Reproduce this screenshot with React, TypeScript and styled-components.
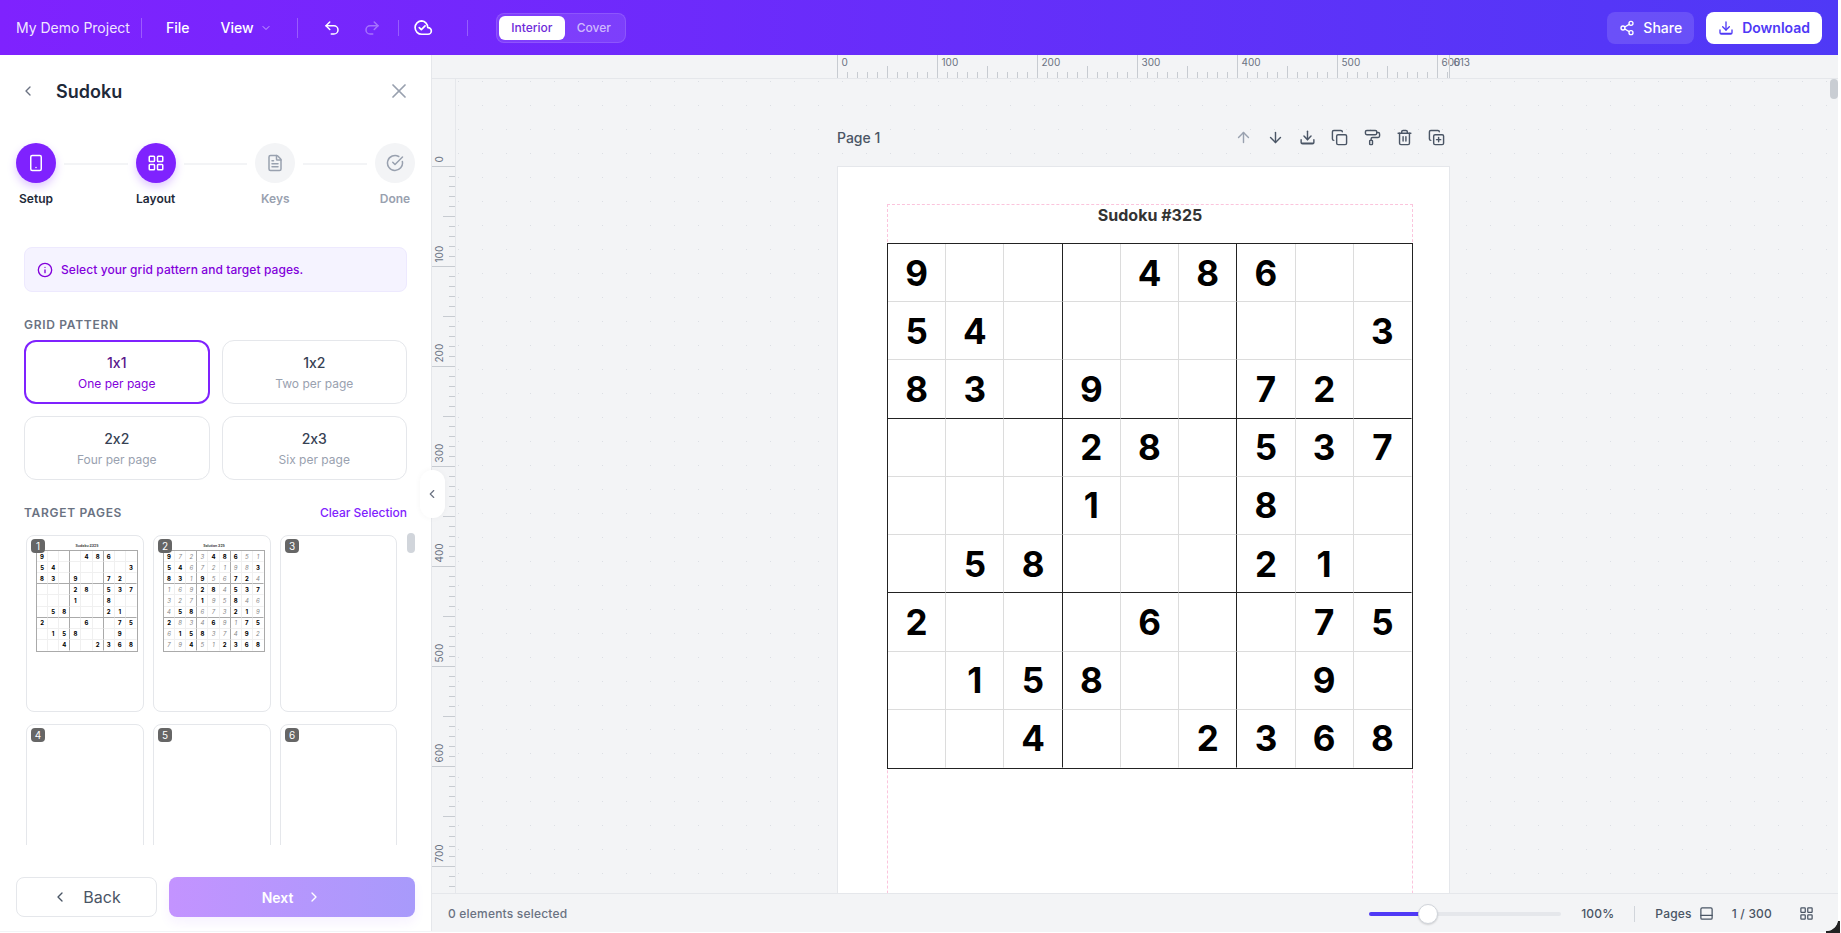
import { Fragment } from "react";
import styled, { createGlobalStyle } from "styled-components";
import {
  ArrowDown,
  ArrowUp,
  ChevronDown,
  ChevronLeft,
  ChevronRight,
  CircleCheckBig,
  Copy,
  CopyPlus,
  FileText,
  Info,
  LayoutGrid,
  PaintRoller,
  PanelBottom,
  Redo2,
  Share2,
  Smartphone,
  Trash2,
  Undo2,
  X,
} from "lucide-react";

const GlobalStyle = createGlobalStyle`
  html, body {
    margin: 0;
    background: #fff;
    overflow: hidden;
  }
  body {
    font-family: Inter, "Liberation Sans", sans-serif;
    font-feature-settings: "calt" 0;
  }
  * {
    box-sizing: border-box;
  }
`;

const PUZZLE = [
  "9...486..",
  "54......3",
  "83.9..72.",
  "...28.537",
  "...1..8..",
  ".58...21.",
  "2...6..75",
  ".158...9.",
  "..4..2368",
];
const SOLUTION = [
  "972348651",
  "546721983",
  "831956724",
  "169284537",
  "327195846",
  "458673219",
  "283469175",
  "615837492",
  "794512368",
];

const STEPS = [
  { label: "Setup", Icon: Smartphone, active: true },
  { label: "Layout", Icon: LayoutGrid, active: true },
  { label: "Keys", Icon: FileText, active: false },
  { label: "Done", Icon: CircleCheckBig, active: false },
];

const PATTERNS = [
  { title: "1x1", sub: "One per page", selected: true },
  { title: "1x2", sub: "Two per page", selected: false },
  { title: "2x2", sub: "Four per page", selected: false },
  { title: "2x3", sub: "Six per page", selected: false },
];

const Frame = styled.div`
  position: relative;
  width: 1838px;
  height: 931px;
  display: flex;
  flex-direction: column;
  overflow: hidden;
  border-bottom-right-radius: 12px;
`;
const Corner = styled.div`
  position: absolute;
  left: 1826px;
  top: 921px;
  width: 14px;
  height: 12px;
  background: #222;
`;
const BottomLine = styled.div`
  height: 1px;
  width: 1838px;
  background: #f3f4f6;
`;

const Header = styled.header`
  height: 55px;
  flex-shrink: 0;
  display: flex;
  align-items: center;
  justify-content: space-between;
  padding: 0 16px;
  color: #fff;
  background: linear-gradient(90deg, #7f22fe, #4f39f6);
`;
const HeaderGroup = styled.div`
  display: flex;
  align-items: center;
`;
const ProjectName = styled.span`
  font-size: 14px;
  width: 113px;
  white-space: nowrap;
  color: rgba(255, 255, 255, 0.9);
`;
const Divider = styled.div<{ $ml: number; $mr: number; $h?: number }>`
  width: 1px;
  height: ${(p) => p.$h ?? 20}px;
  margin: 0 ${(p) => p.$mr}px 0 ${(p) => p.$ml}px;
  background: rgba(255, 255, 255, 0.25);
`;
const MenuItem = styled.span<{ $ml?: number }>`
  display: flex;
  align-items: center;
  gap: 6px;
  font-size: 14px;
  font-weight: 500;
  margin-left: ${(p) => p.$ml ?? 0}px;
`;
const ChevronWrap = styled.span`
  display: flex;
  opacity: 0.6;
`;
const ToolIcon = styled.span<{ $ml?: number; $dim?: boolean }>`
  display: flex;
  margin-left: ${(p) => p.$ml ?? 0}px;
  opacity: ${(p) => (p.$dim ? 0.35 : 1)};
`;
const ModeToggle = styled.div`
  width: 130px;
  height: 30px;
  display: flex;
  align-items: center;
  padding: 2px;
  border-radius: 8px;
  background: rgba(255, 255, 255, 0.1);
  border: 1px solid rgba(255, 255, 255, 0.12);
`;
const ModeOption = styled.span<{ $on?: boolean }>`
  height: 24px;
  width: ${(p) => (p.$on ? 67 : 58)}px;
  display: flex;
  align-items: center;
  justify-content: center;
  border-radius: 6px;
  font-size: 12px;
  font-weight: 500;
  background: ${(p) => (p.$on ? "#fff" : "transparent")};
  color: ${(p) => (p.$on ? "#6e2bd9" : "rgba(255,255,255,.65)")};
`;
const ShareButton = styled.button`
  height: 32px;
  display: flex;
  align-items: center;
  gap: 8px;
  padding: 0 12px;
  border: 0;
  border-radius: 8px;
  color: #fff;
  background: rgba(255, 255, 255, 0.13);
  font: 500 14px Inter, sans-serif;
`;
const DownloadButton = styled.button`
  height: 32px;
  margin-left: 12px;
  display: flex;
  align-items: center;
  gap: 8px;
  padding: 0 12px;
  border: 0;
  border-radius: 8px;
  color: #4f39f6;
  background: #fff;
  font: 600 14px Inter, sans-serif;
`;

const Main = styled.div`
  position: relative;
  flex: 1;
  min-height: 0;
  display: flex;
`;
const Sidebar = styled.aside`
  width: 432px;
  flex-shrink: 0;
  display: flex;
  flex-direction: column;
  background: #fff;
  border-right: 1px solid #e5e7eb;
`;
const TitleRow = styled.div`
  height: 40px;
  margin-top: 16px;
  padding: 0 20px 0 20px;
  display: flex;
  align-items: center;
  color: #6a7282;
`;
const SidebarTitle = styled.h2`
  flex: 1;
  margin: 0 0 0 20px;
  font-size: 18px;
  font-weight: 600;
  color: #1e2939;
`;
const Stepper = styled.div`
  margin-top: 32px;
  padding: 0 16px;
  display: flex;
  align-items: flex-start;
`;
const Step = styled.div`
  width: 40px;
  display: flex;
  flex-direction: column;
  align-items: center;
`;
const StepCircle = styled.div<{ $active: boolean }>`
  width: 40px;
  height: 40px;
  border-radius: 50%;
  display: flex;
  align-items: center;
  justify-content: center;
  color: ${(p) => (p.$active ? "#fff" : "#99a1af")};
  background: ${(p) => (p.$active ? "#7f22fe" : "#f3f4f6")};
  box-shadow: ${(p) => (p.$active ? "0 4px 8px rgba(127,34,254,.25)" : "none")};
`;
const StepLabel = styled.span<{ $active: boolean }>`
  margin-top: 8px;
  line-height: 16px;
  font-size: 12px;
  font-weight: 600;
  white-space: nowrap;
  color: ${(p) => (p.$active ? "#1e2939" : "#99a1af")};
`;
const StepLine = styled.div`
  flex: 1;
  height: 2px;
  margin: 20px 8px 0;
  background: #f3f4f6;
`;
const InfoBox = styled.div`
  height: 45px;
  margin: 40px 24px 0;
  padding: 0 12px;
  display: flex;
  align-items: center;
  gap: 8px;
  border-radius: 8px;
  background: #f5f3ff;
  border: 1px solid #ede9fe;
  color: #8200db;
  font-size: 12px;
  font-weight: 500;
  letter-spacing: 0.08px;
`;
const SectionLabel = styled.span`
  display: block;
  font-size: 12px;
  line-height: 14px;
  font-weight: 600;
  letter-spacing: 0.7px;
  color: #6a7282;
`;
const PatternSection = styled.div`
  margin: 26px 24px 0;
`;
const PatternGrid = styled.div`
  margin-top: 8px;
  display: grid;
  grid-template-columns: 1fr 1fr;
  gap: 12px;
`;
const PatternCard = styled.div<{ $selected: boolean }>`
  height: 64px;
  padding-top: 1px;
  display: flex;
  flex-direction: column;
  align-items: center;
  justify-content: center;
  gap: 6px;
  border-radius: 12px;
  background: #fff;
  border: ${(p) => (p.$selected ? "2px solid #7f22fe" : "1px solid #e5e7eb")};
`;
const PatternTitle = styled.span<{ $selected: boolean }>`
  font-size: 14px;
  line-height: 17px;
  font-weight: 500;
  color: ${(p) => (p.$selected ? "#59168b" : "#364153")};
`;
const PatternSub = styled.span<{ $selected: boolean }>`
  font-size: 12px;
  line-height: 14px;
  color: ${(p) => (p.$selected ? "#8200db" : "#99a1af")};
`;
const TargetHead = styled.div`
  margin: 26px 24px 0;
  display: flex;
  justify-content: space-between;
  align-items: center;
`;
const ClearLink = styled.span`
  font-size: 12px;
  line-height: 14px;
  font-weight: 500;
  color: #7f22fe;
`;
const ThumbViewport = styled.div`
  position: relative;
  height: 312px;
  margin-top: 13px;
  padding: 2px 0 0 26px;
  overflow: hidden;
`;
const ThumbGrid = styled.div`
  width: 371px;
  display: grid;
  grid-template-columns: repeat(3, 1fr);
  gap: 12px 9px;
`;
const Thumb = styled.div`
  position: relative;
  height: 177px;
  padding: 7px 5px 0 9px;
  border: 1px solid #e5e7eb;
  border-radius: 8px;
  background: #fff;
`;
const ThumbBadge = styled.span`
  position: absolute;
  left: 4px;
  top: 3px;
  width: 14px;
  height: 14px;
  display: flex;
  align-items: center;
  justify-content: center;
  border-radius: 4px;
  background: #666;
  color: #fff;
  font-size: 10px;
  z-index: 1;
`;
const ThumbTitle = styled.div`
  height: 7px;
  line-height: 7px;
  font-size: 3.5px;
  font-weight: 700;
  text-align: center;
  color: #444;
`;
const ScrollThumb = styled.div`
  position: absolute;
  left: 407px;
  top: 0;
  width: 8px;
  height: 20px;
  border-radius: 4px;
  background: #d1d5db;
`;
const SidebarFooter = styled.div`
  margin-top: 32px;
  padding: 0 16px;
  display: flex;
  gap: 12px;
`;
const BackButton = styled.button`
  width: 141px;
  height: 40px;
  display: flex;
  align-items: center;
  justify-content: center;
  gap: 15px;
  background: #fff;
  border: 1px solid #e5e7eb;
  border-radius: 8px;
  color: #4a5565;
  font: 400 16px Inter, sans-serif;
`;
const NextButton = styled.button`
  flex: 1;
  height: 40px;
  display: flex;
  align-items: center;
  justify-content: center;
  gap: 13px;
  border: 0;
  border-radius: 8px;
  color: #fff;
  background: linear-gradient(90deg, #c393ff, #a89afb);
  box-shadow: 0 6px 12px rgba(127, 34, 254, 0.06);
  font: 600 14px Inter, sans-serif;
`;

const CollapseTab = styled.div`
  position: absolute;
  left: 420px;
  top: 415px;
  width: 25px;
  height: 48px;
  padding-right: 2px;
  display: flex;
  align-items: center;
  justify-content: center;
  border-radius: 12px;
  background: #fff;
  box-shadow: 0 0 6px rgba(0, 0, 0, 0.04);
  color: #6a7282;
  z-index: 2;
`;

const Workspace = styled.section`
  position: relative;
  flex: 1;
  min-width: 0;
  display: flex;
  flex-direction: column;
  background: #f3f4f6;
`;
const TopRuler = styled.svg`
  display: block;
  flex-shrink: 0;
  width: 1406px;
  height: 24px;
  border-bottom: 1px solid #e5e7eb;
`;
const WorkRow = styled.div`
  flex: 1;
  min-height: 0;
  display: flex;
`;
const LeftRuler = styled.svg`
  display: block;
  flex-shrink: 0;
  width: 24px;
  height: 814px;
  border-right: 1px solid #e5e7eb;
`;
const RulerText = styled.text`
  font-family: Inter, sans-serif;
  font-size: 10px;
  fill: #6a7282;
`;
const Canvas = styled.div`
  position: relative;
  flex: 1;
  min-width: 0;
  overflow: hidden;
  padding: 46px 0 0 381px;
  background-color: #f3f4f6;
  background-image: radial-gradient(circle at 0.5px 0.5px, #dcdfe4 1px, transparent 1px);
  background-size: 24px 24px;
  background-position: 2px 2px;
`;
const CanvasScroll = styled.div`
  position: absolute;
  right: 0;
  top: 0;
  width: 8px;
  height: 20px;
  border-radius: 4px;
  background: #c9cdd3;
`;
const PageHead = styled.div`
  width: 613px;
  height: 24px;
  padding-right: 5px;
  display: flex;
  align-items: center;
  justify-content: space-between;
  font-size: 14px;
  font-weight: 500;
  color: #4a5565;
`;
const PageActions = styled.div`
  display: flex;
  gap: 15.2px;
  color: #4a5565;
`;
const ActionIcon = styled.span<{ $dim?: boolean }>`
  display: flex;
  color: ${(p) => (p.$dim ? "#99a1af" : "inherit")};
`;
const Page = styled.div`
  width: 613px;
  height: 900px;
  margin-top: 17px;
  padding: 37px 0 0 49px;
  background: #fff;
  border: 1px solid #e5e7eb;
`;
const MarginBox = styled.div`
  width: 526px;
  height: 860px;
  border: 1px dashed #fbc4dc;
`;
const PuzzleTitle = styled.div`
  height: 38px;
  text-align: center;
  font-size: 16px;
  line-height: 20px;
  font-weight: 700;
  color: #333;
`;
const GridFrame = styled.div`
  width: 526px;
  margin: 0 -1px;
`;
const SudokuBoard = styled.div<{ $size: number; $line: string }>`
  width: ${(p) => p.$size}px;
  height: ${(p) => p.$size}px;
  display: grid;
  grid-template-columns: repeat(9, 1fr);
  grid-template-rows: repeat(9, 1fr);
  border: 1px solid ${(p) => p.$line};
`;
const SudokuCell = styled.div<{
  $col: number;
  $row: number;
  $font: number;
  $thin: string;
  $line: string;
  $ghost?: boolean;
}>`
  min-width: 0;
  min-height: 0;
  display: flex;
  align-items: center;
  justify-content: center;
  font-size: ${(p) => p.$font}px;
  font-weight: ${(p) => (p.$ghost ? 400 : 700)};
  font-style: ${(p) => (p.$ghost ? "italic" : "normal")};
  color: ${(p) => (p.$ghost ? "#888" : "#000")};
  border-right: 1px solid
    ${(p) => (p.$col === 8 ? "transparent" : p.$col % 3 === 2 ? p.$line : p.$thin)};
  border-bottom: 1px solid
    ${(p) => (p.$row === 8 ? "transparent" : p.$row % 3 === 2 ? p.$line : p.$thin)};
`;

const StatusBar = styled.footer`
  height: 38px;
  flex-shrink: 0;
  display: flex;
  align-items: center;
  justify-content: space-between;
  padding: 2px 24px 0 16px;
  background: #f3f4f6;
  border-top: 1px solid #e5e7eb;
  font-size: 12px;
  font-weight: 500;
  letter-spacing: 0.2px;
  color: #6a7282;
`;
const StatusRight = styled.div`
  display: flex;
  align-items: center;
  color: #4a5565;
`;
const ZoomTrack = styled.div`
  position: relative;
  width: 192px;
  height: 4px;
  border-radius: 2px;
  background: #e5e7eb;
`;
const ZoomFill = styled.div`
  height: 100%;
  border-radius: 2px;
  background: #4f39f6;
`;
const ZoomKnob = styled.div`
  position: absolute;
  left: 49px;
  top: -8px;
  width: 20px;
  height: 20px;
  border-radius: 50%;
  background: #fff;
  border: 1px solid #d1d5db;
  box-shadow: 0 1px 2px rgba(0, 0, 0, 0.15);
`;
const StatusText = styled.span<{ $ml: number }>`
  margin-left: ${(p) => p.$ml}px;
  white-space: nowrap;
`;
const StatusDivider = styled.div`
  width: 1px;
  height: 16px;
  margin-left: 20px;
  background: #d1d5db;
`;
const StatusIcon = styled.span<{ $ml: number }>`
  display: flex;
  margin-left: ${(p) => p.$ml}px;
`;

function CloudCheck() {
  return (
    <svg width="20" height="20" viewBox="0 0 24 24" fill="none" stroke="#fff" strokeWidth="2" strokeLinecap="round" strokeLinejoin="round">
      <path d="M10.5 3.5a8 8 0 1 0 0 16H18a4 4 0 0 0 0-8h-.3a8 8 0 0 0-7.2-8Z" />
      <path d="m7.5 11.5 2.5 2.5 4.5-4.5" />
    </svg>
  );
}

function TrayDownload({ color, size = 16 }: { color: string; size?: number }) {
  return (
    <svg width={size} height={size} viewBox="0 0 24 24" fill="none" stroke={color} strokeWidth="2" strokeLinecap="round" strokeLinejoin="round">
      <path d="M12 3v12" />
      <path d="m7 10 5 5 5-5" />
      <path d="M3 15v4a2 2 0 0 0 2 2h14a2 2 0 0 0 2-2v-4" />
      <path d="M4 20h16" />
    </svg>
  );
}

function HorizontalTicks() {
  const origin = 405.5;
  const ticks = [];
  for (let v = 0; v <= 610; v += 10) {
    const h = v % 100 === 0 ? 23 : v % 50 === 0 ? 12 : 6;
    ticks.push(
      <line key={v} x1={origin + v} x2={origin + v} y1={23 - h} y2={23} stroke="#c7cbd1" />,
    );
    if (v % 100 === 0) {
      ticks.push(
        <RulerText key={`t${v}`} x={origin + v + 4} y={11}>
          {v}
        </RulerText>,
      );
    }
  }
  return (
    <TopRuler>
      {ticks}
      <line x1={origin + 612} x2={origin + 612} y1={0} y2={23} stroke="#c7cbd1" />
      <RulerText x={origin + 616} y={11}>
        613
      </RulerText>
    </TopRuler>
  );
}

function VerticalTicks() {
  const origin = 87.5;
  const ticks = [];
  for (let v = 0; v <= 720; v += 10) {
    const h = v % 100 === 0 ? 23 : v % 50 === 0 ? 12 : 6;
    ticks.push(
      <line key={v} x1={23 - h} x2={23} y1={origin + v} y2={origin + v} stroke="#c7cbd1" />,
    );
    if (v % 100 === 0) {
      ticks.push(
        <RulerText key={`t${v}`} transform={`translate(11 ${origin + v - 4}) rotate(-90)`}>
          {v}
        </RulerText>,
      );
    }
  }
  return <LeftRuler>{ticks}</LeftRuler>;
}

interface BoardProps {
  size: number;
  font: number;
  thin: string;
  line: string;
  showGhost?: boolean;
}
function Board({ size, font, thin, line, showGhost }: BoardProps) {
  return (
    <SudokuBoard $size={size} $line={line}>
      {SOLUTION.flatMap((row, r) =>
        row.split("").map((digit, c) => {
          const given = PUZZLE[r][c] !== ".";
          return (
            <SudokuCell
              key={`${r}-${c}`}
              $col={c}
              $row={r}
              $font={font}
              $thin={thin}
              $line={line}
              $ghost={!given}
            >
              {given || showGhost ? digit : ""}
            </SudokuCell>
          );
        }),
      )}
    </SudokuBoard>
  );
}

export default function App() {
  return (
    <>
      <GlobalStyle />
      <Corner />
      <Frame>
        <Header>
          <HeaderGroup>
            <ProjectName>My Demo Project</ProjectName>
            <Divider $ml={12} $mr={24} />
            <MenuItem>File</MenuItem>
            <MenuItem $ml={31}>
              View
              <ChevronWrap>
                <ChevronDown size={12} />
              </ChevronWrap>
            </MenuItem>
            <Divider $ml={25} $mr={25} />
            <ToolIcon>
              <Undo2 size={18} />
            </ToolIcon>
            <ToolIcon $ml={22} $dim>
              <Redo2 size={18} />
            </ToolIcon>
            <Divider $ml={17} $mr={14} $h={16} />
            <ToolIcon>
              <CloudCheck />
            </ToolIcon>
            <Divider $ml={34} $mr={28} $h={16} />
            <ModeToggle>
              <ModeOption $on>Interior</ModeOption>
              <ModeOption>Cover</ModeOption>
            </ModeToggle>
          </HeaderGroup>
          <HeaderGroup>
            <ShareButton>
              <Share2 size={16} />
              Share
            </ShareButton>
            <DownloadButton>
              <TrayDownload color="#4f39f6" />
              Download
            </DownloadButton>
          </HeaderGroup>
        </Header>
        <Main>
          <Sidebar>
            <TitleRow>
              <ChevronLeft size={16} />
              <SidebarTitle>Sudoku</SidebarTitle>
              <X size={24} strokeWidth={1.75} color="#99a1af" />
            </TitleRow>
            <Stepper>
              {STEPS.map(({ label, Icon, active }, i) => (
                <Fragment key={label}>
                  {i > 0 && <StepLine />}
                  <Step>
                    <StepCircle $active={active}>
                      <Icon size={18} />
                    </StepCircle>
                    <StepLabel $active={active}>{label}</StepLabel>
                  </Step>
                </Fragment>
              ))}
            </Stepper>
            <InfoBox>
              <Info size={16} />
              Select your grid pattern and target pages.
            </InfoBox>
            <PatternSection>
              <SectionLabel>GRID PATTERN</SectionLabel>
              <PatternGrid>
                {PATTERNS.map((pattern) => (
                  <PatternCard key={pattern.title} $selected={pattern.selected}>
                    <PatternTitle $selected={pattern.selected}>{pattern.title}</PatternTitle>
                    <PatternSub $selected={pattern.selected}>{pattern.sub}</PatternSub>
                  </PatternCard>
                ))}
              </PatternGrid>
            </PatternSection>
            <TargetHead>
              <SectionLabel>TARGET PAGES</SectionLabel>
              <ClearLink>Clear Selection</ClearLink>
            </TargetHead>
            <ThumbViewport>
              <ThumbGrid>
                {[1, 2, 3, 4, 5, 6].map((n) => (
                  <Thumb key={n}>
                    <ThumbBadge>{n}</ThumbBadge>
                    {n === 1 && (
                      <>
                        <ThumbTitle>Sudoku #325</ThumbTitle>
                        <Board size={102} font={6} thin="#f0f0f0" line="#aaa" />
                      </>
                    )}
                    {n === 2 && (
                      <>
                        <ThumbTitle>Solution 325</ThumbTitle>
                        <Board size={102} font={6} thin="#f0f0f0" line="#aaa" showGhost />
                      </>
                    )}
                  </Thumb>
                ))}
              </ThumbGrid>
              <ScrollThumb />
            </ThumbViewport>
            <SidebarFooter>
              <BackButton>
                <ChevronLeft size={16} />
                Back
              </BackButton>
              <NextButton>
                Next
                <ChevronRight size={16} />
              </NextButton>
            </SidebarFooter>
          </Sidebar>
          <CollapseTab>
            <ChevronLeft size={14} />
          </CollapseTab>
          <Workspace>
            <HorizontalTicks />
            <WorkRow>
              <VerticalTicks />
              <Canvas>
                <CanvasScroll />
                <PageHead>
                  Page 1
                  <PageActions>
                    <ActionIcon $dim>
                      <ArrowUp size={17} />
                    </ActionIcon>
                    <ActionIcon>
                      <ArrowDown size={17} />
                    </ActionIcon>
                    <ActionIcon>
                      <TrayDownload color="#4a5565" size={17} />
                    </ActionIcon>
                    <ActionIcon>
                      <Copy size={17} />
                    </ActionIcon>
                    <ActionIcon>
                      <PaintRoller size={17} />
                    </ActionIcon>
                    <ActionIcon>
                      <Trash2 size={17} />
                    </ActionIcon>
                    <ActionIcon>
                      <CopyPlus size={17} />
                    </ActionIcon>
                  </PageActions>
                </PageHead>
                <Page>
                  <MarginBox>
                    <PuzzleTitle>Sudoku #325</PuzzleTitle>
                    <GridFrame>
                      <Board size={526} font={35} thin="#dcdcdc" line="#222" />
                    </GridFrame>
                  </MarginBox>
                </Page>
              </Canvas>
            </WorkRow>
            <StatusBar>
              0 elements selected
              <StatusRight>
                <ZoomTrack>
                  <ZoomFill style={{ width: `${(59 / 192) * 100}%` }} />
                  <ZoomKnob />
                </ZoomTrack>
                <StatusText $ml={20}>100%</StatusText>
                <StatusDivider />
                <StatusText $ml={20}>Pages</StatusText>
                <StatusIcon $ml={7}>
                  <PanelBottom size={15} />
                </StatusIcon>
                <StatusText $ml={18}>1 / 300</StatusText>
                <StatusIcon $ml={27}>
                  <LayoutGrid size={15} />
                </StatusIcon>
              </StatusRight>
            </StatusBar>
          </Workspace>
        </Main>
      </Frame>
      <BottomLine />
    </>
  );
}
